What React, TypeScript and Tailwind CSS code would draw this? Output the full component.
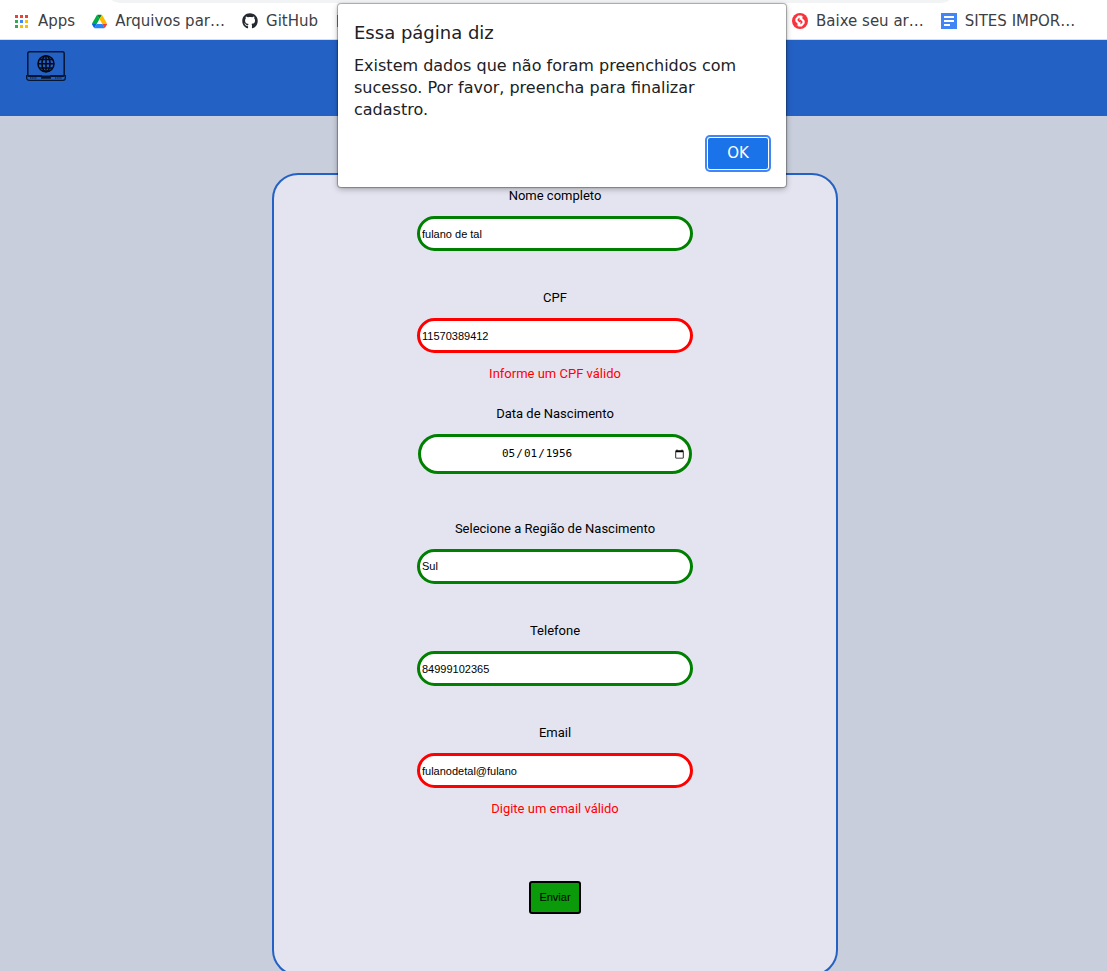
import type { ReactNode } from "react";
import { FaGithub } from "react-icons/fa";

function AppsIcon() {
  const colors = ["#ea4335", "#ea4335", "#ea4335", "#34a853", "#4285f4", "#fbbc04", "#34a853", "#fbbc04", "#fbbc04"];
  return (
    <svg viewBox="0 0 13 13" className="size-[13px]" shapeRendering="crispEdges" aria-hidden="true">
      {colors.map((color, i) => (
        <rect key={i} x={(i % 3) * 5} y={Math.floor(i / 3) * 5} width="3" height="3" fill={color} />
      ))}
    </svg>
  );
}

function DriveIcon() {
  return (
    <svg viewBox="0 0 87.3 78" className="size-[15px]" aria-hidden="true">
      <path fill="#0066da" d="m6.6 66.85 3.85 6.65c.8 1.4 1.95 2.5 3.3 3.3l13.75-23.8H0c0 1.55.4 3.1 1.2 4.5z" />
      <path fill="#00ac47" d="M43.65 25 29.9 1.2c-1.35.8-2.5 1.9-3.3 3.3L1.2 48.5A9 9 0 0 0 0 53h27.5z" />
      <path fill="#ea4335" d="M73.55 76.8c1.35-.8 2.5-1.9 3.3-3.3l1.6-2.75L86.1 57.5c.8-1.4 1.2-2.95 1.2-4.5H59.8l5.85 11.5z" />
      <path fill="#00832d" d="M43.65 25 57.4 1.2C56.05.4 54.5 0 52.9 0H34.4c-1.6 0-3.15.45-4.5 1.2z" />
      <path fill="#2684fc" d="M59.8 53H27.5L13.75 76.8c1.35.8 2.9 1.2 4.5 1.2h50.8c1.6 0 3.15-.45 4.5-1.2z" />
      <path fill="#ffba00" d="m73.4 26.5-12.7-22c-.8-1.4-1.95-2.5-3.3-3.3L43.65 25 59.8 53h27.45c0-1.55-.4-3.1-1.2-4.5z" />
    </svg>
  );
}

function DownloadSiteIcon() {
  return (
    <svg viewBox="0 0 16 16" className="size-4" aria-hidden="true">
      <circle cx="8" cy="8" r="8" fill="#f8333c" />
      <g fill="none" stroke="#fff" strokeWidth="2.1">
        <path d="M9.8 3.6H6.6L4.4 6.2v1.6l3 3.2" />
        <path d="M6.2 12.4h3.2l2.2-2.6V8.2l-3-3.2" />
      </g>
      <path d="M8.400 8.400v4.200H4.600zM7.600 7.600V3.400h3.800z" fill="#fff" />
    </svg>
  );
}

function DocsIcon() {
  return (
    <svg viewBox="0 0 16 16" className="size-4" shapeRendering="crispEdges" aria-hidden="true">
      <rect width="16" height="16" rx="1" fill="#4285f4" />
      <path d="M3 3h10v2H3zM3 7h10v2H3zM3 11h6v2H3z" fill="#fff" />
    </svg>
  );
}

function LaptopIcon() {
  return (
    <svg viewBox="0 0 40 30" className="h-[30px] w-10" fill="none" stroke="#071633" aria-label="Cadastro" role="img">
      <rect x="1.800" y="0.800" width="36.400" height="24.400" rx="1.800" strokeWidth="1.500" />
      <path d="M.7 24.700h14.600l1 1.600h7.400l1-1.600h14.600v2.300a2.300 2.300 0 0 1-2.300 2.300H3A2.300 2.300 0 0 1 .7 27z" strokeWidth="1.300" />
      <path d="M4 27h7M29 27h7" strokeWidth="1" strokeDasharray="1.400 .8" />
      <path d="M15 27h10" strokeWidth="1.500" />
      <g stroke="#020817" strokeWidth="1.500">
        <circle cx="20" cy="12.800" r="8" />
        <ellipse cx="20" cy="12.800" rx="4" ry="8" />
        <path d="M20 4.800v16M12 12.800h16M13.500 8.500h13M13.500 17.100h13" />
      </g>
    </svg>
  );
}

function Bookmark({ icon, label }: { icon: ReactNode; label: string }) {
  return (
    <a href="#" className="flex shrink-0 items-center gap-2 whitespace-nowrap">
      {icon}
      {label}
    </a>
  );
}

function Field({ id, label, error, children }: { id: string; label: string; error?: string; children: ReactNode }) {
  return (
    <div className="flex flex-col items-center">
      <label htmlFor={id} className="mb-3 text-[13px] leading-4">
        {label}
      </label>
      {children}
      {error ? <p className="mt-[13px] mb-6 text-[13px] leading-4 text-[#ff0000]">{error}</p> : <div className="h-[39px]" />}
    </div>
  );
}

const control =
  "h-[35px] w-[276px] max-w-full appearance-none rounded-full border-[3px] bg-white px-[2px] font-['Liberation_Sans',Arial,sans-serif] text-[11px] text-black outline-none";

export default function App() {
  return (
    <div className="relative flex h-screen flex-col overflow-hidden bg-[#c8cedb] font-[Roboto,sans-serif] text-black">
      <nav className="flex h-10 shrink-0 flex-col overflow-hidden border-b border-[#dadce0] bg-white font-['DejaVu_Sans',sans-serif] text-[15px] text-[#3c4043]">
        <div className="flex h-[3px] shrink-0 items-end overflow-hidden pr-[152px] pl-[106px]">
          <div className="h-7 flex-1 shrink-0 rounded-full bg-[#f1f3f4]" />
        </div>
        <div className="flex flex-1 items-center gap-[17px] pl-[15px]">
          <Bookmark icon={<span className="pr-[2px]"><AppsIcon /></span>} label="Apps" />
          <Bookmark icon={<DriveIcon />} label="Arquivos par…" />
          <Bookmark icon={<FaGithub className="size-4 text-[#24292f]" />} label="GitHub" />
          <div className="w-[440px] shrink-0 pl-[2px]">
            <div className="h-3 w-4 bg-[#3b9bd1]" />
          </div>
          <Bookmark icon={<DownloadSiteIcon />} label="Baixe seu ar…" />
          <Bookmark icon={<DocsIcon />} label="SITES IMPOR…" />
        </div>
      </nav>

      <header className="h-[76px] shrink-0 bg-[#2461c5] px-[26px] pt-[11px]">
        <LaptopIcon />
      </header>

      <main className="flex-1 overflow-y-auto pt-[57px] pl-[3px] [scrollbar-width:none]">
        <form
          noValidate
          onSubmit={(e) => e.preventDefault()}
          className="mx-auto flex w-[566px] max-w-full flex-col items-center rounded-[26px] border-2 border-[#2461c5] bg-[#e4e4f0] pt-[13px] pb-[60px]"
        >
          <Field id="nome" label="Nome completo">
            <input id="nome" type="text" defaultValue="fulano de tal" className={`${control} border-[#008000]`} />
          </Field>
          <Field id="cpf" label="CPF" error="Informe um CPF válido">
            <input id="cpf" type="text" defaultValue="11570389412" className={`${control} border-[#ff0000]`} />
          </Field>
          <Field id="nascimento" label="Data de Nascimento">
            <input
              id="nascimento"
              type="date"
              defaultValue="1956-05-01"
              className="mb-2 h-10 w-[274px] max-w-full rounded-full border-[3px] border-[#008000] bg-white pr-[2px] pl-20 font-['DejaVu_Sans_Mono',monospace] text-[11px] outline-none"
            />
          </Field>
          <Field id="regiao" label="Selecione a Região de Nascimento">
            <select id="regiao" defaultValue="Sul" className={`${control} border-[#008000]`}>
              <option>Norte</option>
              <option>Nordeste</option>
              <option>Centro-Oeste</option>
              <option>Sudeste</option>
              <option>Sul</option>
            </select>
          </Field>
          <Field id="telefone" label="Telefone">
            <input id="telefone" type="tel" defaultValue="84999102365" className={`${control} border-[#008000]`} />
          </Field>
          <Field id="email" label="Email" error="Digite um email válido">
            <input id="email" type="email" defaultValue="fulanodetal@fulano" className={`${control} border-[#ff0000]`} />
          </Field>
          <button
            type="submit"
            className="mt-10 h-[33px] w-[52px] rounded-[3px] border-2 border-black bg-[#0a9a0a] font-['Liberation_Sans',Arial,sans-serif] text-[11px] text-black"
          >
            Enviar
          </button>
        </form>
      </main>

      <div
        role="alertdialog"
        aria-labelledby="alert-title"
        aria-describedby="alert-text"
        className="absolute top-1 left-[338px] w-[448px] rounded-[3px] bg-white px-4 pt-[18px] pb-[18px] font-['DejaVu_Sans',sans-serif] text-[#202124] shadow-[0_0_1px_1px_rgba(0,0,0,0.3),0_2px_6px_rgba(0,0,0,0.3)]"
      >
        <h1 id="alert-title" className="text-[18px] leading-[22px]">
          Essa página diz
        </h1>
        <p id="alert-text" className="mt-[11px] text-[16px] leading-[22px]">
          Existem dados que não foram preenchidos com sucesso. Por favor, preencha para finalizar cadastro.
        </p>
        <div className="mt-[17px] flex justify-end pr-[2px]">
          <button
            type="button"
            className="h-[31px] w-[60px] rounded-[2px] bg-[#1a73e8] text-[15px] text-white shadow-[0_0_0_1px_#fff,0_0_0_3px_#4285f4]"
          >
            OK
          </button>
        </div>
      </div>
    </div>
  );
}
